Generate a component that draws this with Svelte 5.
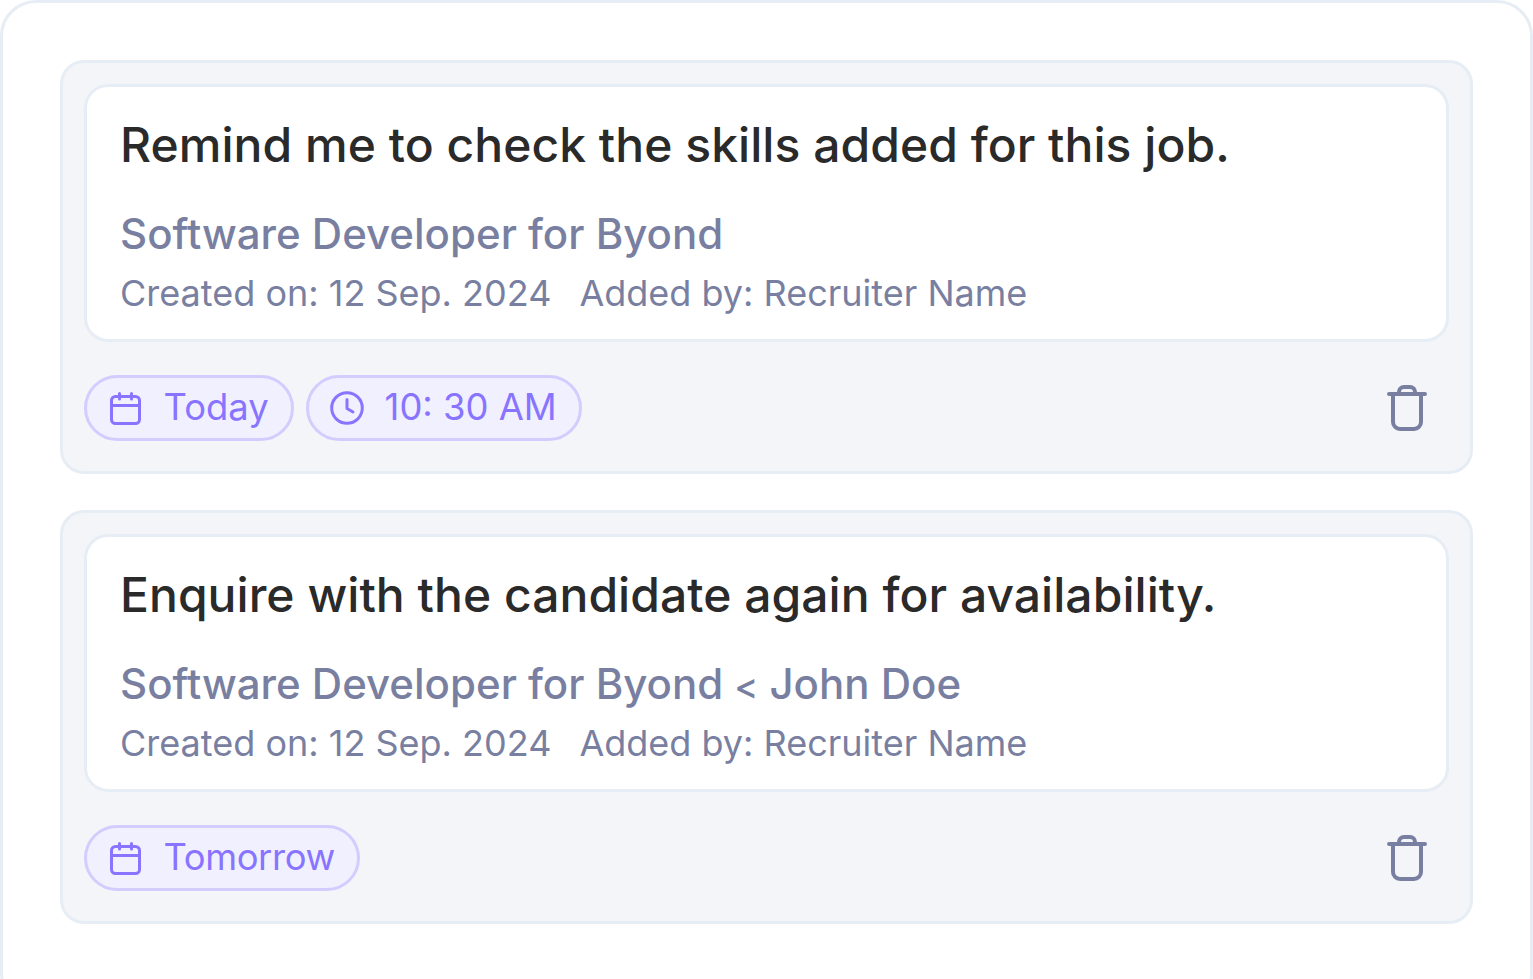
<script>
  const reminders = [
    {
      text: 'Remind me to check the skills added for this job.',
      job: ['Software Developer for Byond'],
      chips: [
        { icon: 'calendar', label: 'Today' },
        { icon: 'clock', label: '10: 30 AM' },
      ],
    },
    {
      text: 'Enquire with the candidate again for availability.',
      job: ['Software Developer for Byond', 'John Doe'],
      chips: [{ icon: 'calendar', label: 'Tomorrow', tight: true }],
    },
  ]
</script>

<main class="panel">
  {#each reminders as item}
    <section class="card">
      <div class="body">
        <p class="title">{item.text}</p>
        <p class="job">
          {#each item.job as part, i}
            {#if i > 0}
              <span class="sep">&lt;</span>
            {/if}
            {part}
          {/each}
        </p>
        <p class="meta">
          <span>Created on: 12 Sep. 2024</span>
          <span>Added by: Recruiter Name</span>
        </p>
      </div>
      <div class="actions">
        <div class="chips">
          {#each item.chips as chip}
            <span class="chip" class:tight={chip.tight}>
              {#if chip.icon === 'calendar'}
                <svg class="cal" width="31" height="33" viewBox="0 0 31 33" fill="none" stroke="currentColor" stroke-width="3" stroke-linecap="round" stroke-linejoin="round">
                  <rect x="1.5" y="4.5" width="28" height="27" rx="4" />
                  <path d="M1.5 13.5h28M9.5 1.5v5.5M21.5 1.5v5.5" />
                </svg>
              {:else}
                <svg width="34" height="34" viewBox="0 0 34 34" fill="none" stroke="currentColor" stroke-width="3" stroke-linecap="round" stroke-linejoin="round">
                  <circle cx="17" cy="17" r="15.3" />
                  <path d="M17 8.5v9l6 3.5" />
                </svg>
              {/if}
              <span class="label">{chip.label}</span>
            </span>
          {/each}
        </div>
        <button class="trash" type="button" aria-label="Delete">
          <svg width="40" height="46" viewBox="0 0 40 46" fill="none" stroke="currentColor" stroke-width="4" stroke-linecap="round" stroke-linejoin="round">
            <path d="M2 9h36M6 9v28a7 7 0 0 0 7 7h14a7 7 0 0 0 7-7V9M12 9V7a5 5 0 0 1 5-5h6a5 5 0 0 1 5 5v2" />
          </svg>
        </button>
      </div>
    </section>
  {/each}
</main>

<style>
  :global(body) {
    background: #fff;
    overflow: hidden;
  }

  .panel {
    display: flex;
    flex-direction: column;
    gap: 36px;
    box-sizing: border-box;
    min-height: 1010px;
    padding: 57px;
    border: 3px solid #e7edf5;
    border-radius: 36px;
    background: #fff;
    font-family: Inter, "Liberation Sans", sans-serif;
  }

  .card {
    padding: 21px 21px 30px;
    border: 3px solid #e7edf5;
    border-radius: 24px;
    background: #f4f5f9;
  }

  .body {
    box-sizing: border-box;
    height: 258px;
    padding: 30px 33px 0;
    border: 3px solid #e7edf5;
    border-radius: 24px;
    background: #fff;
  }

  p {
    margin: 0;
  }

  .title {
    color: #2a2a2a;
    font-size: 48px;
    font-weight: 500;
    line-height: 56px;
    letter-spacing: 0.04px;
  }

  .job {
    margin-top: 36px;
    color: #797fa1;
    font-size: 42px;
    font-weight: 500;
    line-height: 50px;
  }

  .sep {
    margin-left: 11px;
    font-size: 36px;
    line-height: 1;
  }

  .meta {
    display: flex;
    gap: 28px;
    margin-top: 12px;
    color: #797fa1;
    font-size: 36px;
    line-height: 44px;
  }

  .actions {
    display: flex;
    align-items: center;
    justify-content: space-between;
    margin-top: 33px;
    padding-right: 22px;
  }

  .chips {
    display: flex;
    gap: 12px;
  }

  .chip {
    display: flex;
    align-items: center;
    gap: 21px;
    box-sizing: border-box;
    height: 66px;
    padding: 0 22px 0 21px;
    border: 3px solid #d3ccff;
    border-radius: 33px;
    background: #f1f0fe;
    color: #8874ff;
    font-size: 36.4px;
    font-weight: 400;
  }

  .chip.tight {
    letter-spacing: -0.4px;
  }

  .label {
    margin-bottom: 2px;
  }

  .cal {
    margin: 0 1.5px 0 2px;
  }

  .trash {
    display: flex;
    padding: 0;
    border: none;
    background: none;
    color: #797fa1;
  }
</style>
